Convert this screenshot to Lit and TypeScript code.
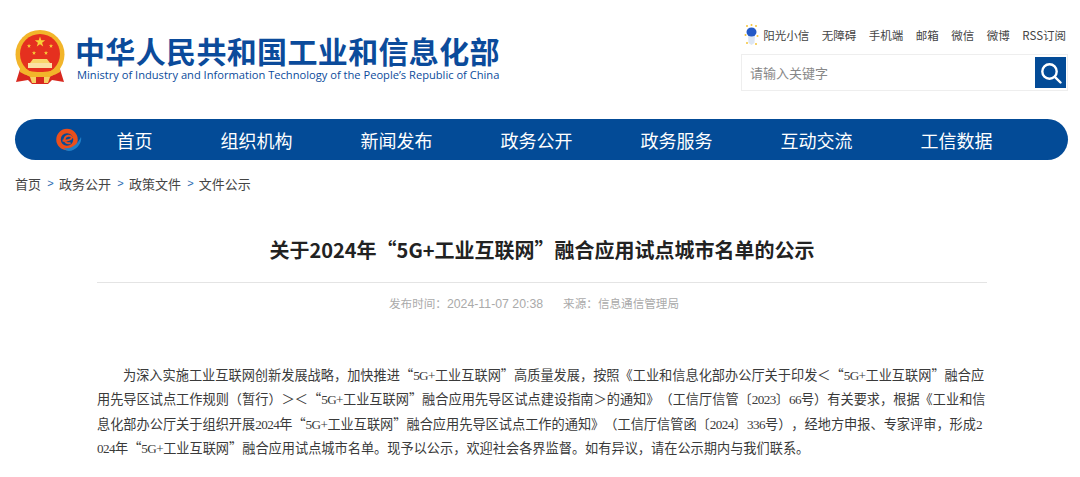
import { LitElement, html, css } from "lit";
import { customElement } from "lit/decorators.js";

const LINKS = ["无障碍", "手机端", "邮箱", "微信", "微博", "RSS订阅"];
const NAV = ["首页", "组织机构", "新闻发布", "政务公开", "政务服务", "互动交流", "工信数据"];
const CRUMBS = ["首页", "政务公开", "政策文件", "文件公示"];
const BODY =
  "为深入实施工业互联网创新发展战略，加快推进“5G+工业互联网”高质量发展，按照《工业和信息化部办公厅关于印发＜“5G+工业互联网”融合应用先导区试点工作规则（暂行）＞＜“5G+工业互联网”融合应用先导区试点建设指南＞的通知》（工信厅信管〔2023〕66号）有关要求，根据《工业和信息化部办公厅关于组织开展2024年“5G+工业互联网”融合应用先导区试点工作的通知》（工信厅信管函〔2024〕336号），经地方申报、专家评审，形成2024年“5G+工业互联网”融合应用试点城市名单。现予以公示，欢迎社会各界监督。如有异议，请在公示期内与我们联系。";

// digits and latin are narrower than the CJK glyphs in the article text
const runs = (text: string) =>
  text.split(/([0-9A-Za-z+]+)/).map((part, i) =>
    i % 2 ? html`<span class="latin">${part}</span>` : part
  );

@customElement("app-root")
export class AppRoot extends LitElement {
  static styles = css`
    :host {
      display: block;
      background: #fff;
      font-family: "Noto Sans CJK SC", sans-serif;
      color: #333;
    }
    .header {
      display: flex;
      justify-content: space-between;
      padding: 24px 12px 0 15px;
      height: 119px;
      box-sizing: border-box;
    }
    .brand {
      display: flex;
      gap: 10px;
      padding-top: 6px;
    }
    .emblem {
      width: 50px;
      height: 55px;
      flex: none;
    }
    .names {
      color: #0b4b9b;
      padding-top: 2px;
    }
    .cn {
      font-size: 30px;
      line-height: 36px;
      font-weight: 700;
      letter-spacing: 0.35px;
      white-space: nowrap;
    }
    .en {
      font-family: "Open Sans", sans-serif;
      font-size: 11.13px;
      line-height: 14px;
      margin-left: 2px;
      white-space: nowrap;
    }
    .tools {
      width: 327px;
    }
    .links {
      display: flex;
      align-items: center;
      justify-content: flex-end;
      gap: 12.5px;
      height: 22px;
      padding-right: 2px;
      font-size: 11.5px;
      color: #444;
      white-space: nowrap;
    }
    .sun {
      display: flex;
      align-items: center;
      gap: 4px;
    }
    .sun svg {
      width: 15px;
      height: 22px;
    }
    .search {
      display: flex;
      justify-content: space-between;
      align-items: center;
      height: 37px;
      margin-top: 8px;
      padding: 0 1px 0 8px;
      border: 1px solid #eee;
      box-sizing: border-box;
      font-size: 13px;
      color: #888;
    }
    .search-btn {
      display: flex;
      align-items: center;
      justify-content: center;
      width: 31px;
      height: 31px;
      background: #034b97;
    }
    .nav {
      display: flex;
      align-items: center;
      gap: 68px;
      height: 41px;
      margin: 0 12px 0 15px;
      padding-left: 101.5px;
      position: relative;
      background: #034b97;
      border-radius: 21px;
      color: #fff;
      font-size: 18px;
      white-space: nowrap;
    }
    .nav svg {
      position: absolute;
      left: 40px;
      top: 7px;
      width: 27px;
      height: 27px;
    }
    .crumbs {
      display: flex;
      align-items: center;
      gap: 5.25px;
      padding: 14px 0 0 15px;
      height: 19px;
      font-size: 13px;
      line-height: 19px;
      color: #444;
    }
    .crumbs i {
      font-style: normal;
      font-family: "Liberation Sans", sans-serif;
      font-size: 11px;
      color: #2a6ab0;
      margin: 0 0 0 1px;
    }
    .article {
      padding: 0 93px 0 97px;
    }
    h1 {
      margin: 42px 0 0;
      padding-bottom: 17px;
      border-bottom: 1px solid #e4e4e4;
      text-align: center;
      font-size: 20px;
      line-height: 30px;
      font-weight: 700;
      color: #222;
    }
    .meta {
      display: flex;
      justify-content: center;
      gap: 20px;
      margin-top: 11px;
      padding-right: 16px;
      font-size: 11.6px;
      line-height: 18px;
      color: #aaa;
    }
    .meta .num {
      font-family: "Liberation Sans", sans-serif;
      font-size: 12.3px;
    }
    p {
      margin: 50px 0 0;
      text-indent: 26px;
      font-size: 13.2px;
      line-height: 24.3px;
      word-break: break-all;
      line-break: anywhere;
      text-spacing-trim: space-all;
      color: #3a3a3a;
    }
    .latin {
      font-family: "Liberation Serif", serif;
      letter-spacing: -0.6px;
      line-height: 1;
    }
  `;

  render() {
    return html`
      <div class="header">
        <div class="brand">
          ${this.emblem()}
          <div class="names">
            <div class="cn">中华人民共和国工业和信息化部</div>
            <div class="en">Ministry of Industry and Information Technology of the People’s Republic of China</div>
          </div>
        </div>
        <div class="tools">
          <div class="links">
            <span class="sun">${this.sunIcon()}阳光小信</span>
            ${LINKS.map((l) => html`<span>${l}</span>`)}
          </div>
          <div class="search">
            <span>请输入关键字</span>
            <span class="search-btn">
              <svg width="22" height="22" viewBox="0 0 22 22" fill="none" stroke="#fff" stroke-width="2.4">
                <circle cx="9.5" cy="9.5" r="7.2"></circle>
                <path d="M14.8 14.8 20.5 20.5" stroke-linecap="round"></path>
              </svg>
            </span>
          </div>
        </div>
      </div>
      <nav class="nav">
        ${this.navLogo()}
        ${NAV.map((n) => html`<span>${n}</span>`)}
      </nav>
      <div class="crumbs">
        ${CRUMBS.map((c, i) => html`${i ? html`<i>&gt;</i>` : ""}<span>${c}</span>`)}
      </div>
      <div class="article">
        <h1>关于2024年“5G+工业互联网”融合应用试点城市名单的公示</h1>
        <div class="meta">
          <span>发布时间：<span class="num">2024-11-07 20:38</span></span>
          <span>来源：信息通信管理局</span>
        </div>
        <p>${runs(BODY)}</p>
      </div>
    `;
  }

  emblem() {
    const star = (x: number, y: number, r: number) => {
      const pts = [];
      for (let i = 0; i < 10; i++) {
        const a = (Math.PI / 5) * i - Math.PI / 2;
        const d = i % 2 ? r * 0.4 : r;
        pts.push(`${(x + d * Math.cos(a)).toFixed(1)},${(y + d * Math.sin(a)).toFixed(1)}`);
      }
      return pts.join(" ");
    };
    return html`
      <svg class="emblem" viewBox="0 0 50 55">
        <path d="M6 36 1 52 13 50 17 54 33 54 37 50 49 52 44 36Z" fill="#d8281f"></path>
        <circle cx="25" cy="24.500" r="24.500" fill="#f2b52a"></circle>
        <circle cx="25" cy="24" r="20" fill="#e5301f"></circle>
        <polygon points=${star(25, 12, 5.5)} fill="#f8d038"></polygon>
        <polygon points=${star(14, 16, 2.2)} fill="#f8d038"></polygon>
        <polygon points=${star(36, 16, 2.2)} fill="#f8d038"></polygon>
        <polygon points=${star(19, 23, 2.2)} fill="#f8d038"></polygon>
        <polygon points=${star(31, 23, 2.2)} fill="#f8d038"></polygon>
        <path d="M18 29h14l3 4H15Z" fill="#f8d66a"></path>
        <path d="M13 33h24v5H13Z" fill="#fae2a4"></path>
        <path d="M5 37c6 4 13 5 20 5s14-1 20-5v5c-6 4-13 5-20 5s-14-1-20-5Z" fill="#f2b52a"></path>
        <path d="M15 47h20l-2 6H17Z" fill="#f7cf63"></path>
        <path d="M21 47h8v6h-8Z" fill="#d8281f"></path>
      </svg>
    `;
  }

  sunIcon() {
    return html`
      <svg viewBox="0 0 15 22">
        <path d="M4 11h7l-.5 8-3 2-3-2Z" fill="#dde6f3"></path>
        <ellipse cx="7.500" cy="8" rx="5" ry="4.500" fill="#2459c6"></ellipse>
        <g fill="#f4c43a">
          <circle cx="3" cy="2" r="1"></circle>
          <circle cx="7.500" cy="1" r="1"></circle>
          <circle cx="12" cy="2" r="1"></circle>
          <circle cx="1.500" cy="11" r="1"></circle>
          <circle cx="13.500" cy="12" r="1"></circle>
          <circle cx="3" cy="19" r="1"></circle>
          <circle cx="12" cy="20" r="1"></circle>
        </g>
      </svg>
    `;
  }

  navLogo() {
    const teeth = Array.from({ length: 12 }, (_, i) => i * 30);
    return html`
      <svg viewBox="0 0 27 27">
        ${teeth.map(
          (a) => html`<rect x="10.500" y="1" width="3" height="4" fill="#e8501e" transform="rotate(${a} 12 13.500)"></rect>`
        )}
        <circle cx="12" cy="13.500" r="8.500" fill="#034b97" stroke="#ea4f1c" stroke-width="4.500"></circle>
        <path d="M7.500 14.500c4 .6 8.500-.5 9.500-3-1.500-2.800-6.500-2.300-7.500 1.500-.5 3 2.500 5 6 4" fill="none" stroke="#ea4f1c" stroke-width="2"></path>
        <path d="M9 22c7 1.500 13-3 17-11 1.500 6-5 14-12 14-2.500 0-4-1-5-3Z" fill="#1f7fc8"></path>
      </svg>
    `;
  }
}
